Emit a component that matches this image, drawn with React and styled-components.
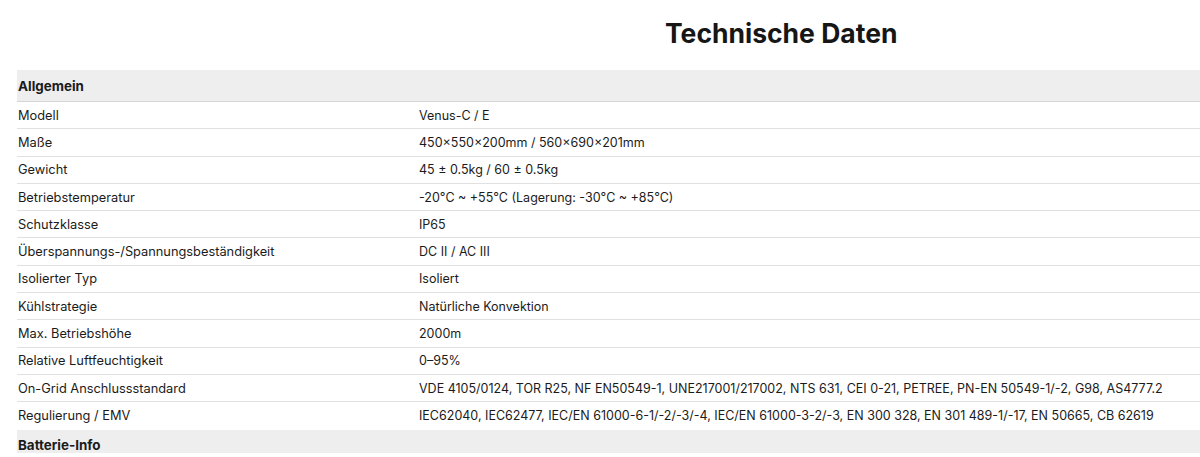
import React from 'react';
import styled, { createGlobalStyle } from 'styled-components';

const bodyFont = "'Inter', 'Lato', sans-serif";

const GlobalStyle = createGlobalStyle`
  html, body {
    margin: 0;
    padding: 0;
    background: #fff;
  }
  body {
    font-family: ${bodyFont};
    color: #1b1b1b;
  }
`;

const Page = styled.div`
  width: 1200px;
  height: 457px;
  overflow: hidden;
  padding-left: 17px;
  box-sizing: border-box;
`;

const Title = styled.h2`
  margin: 0;
  padding: 17px 0 0 648px;
  height: 70px;
  box-sizing: border-box;
  font-weight: 700;
  font-size: 26.5px;
  line-height: 32px;
  color: #161616;
`;

const Table = styled.div`
  display: flex;
  flex-direction: column;
  width: 100%;
`;

const SectionRow = styled.div`
  display: flex;
  align-items: center;
  height: ${(p) => p.$height}px;
  background: #eeeeee;
  border-bottom: ${(p) => (p.$bordered ? '1px solid #d6d6d6' : 'none')};
  box-sizing: border-box;
  font-weight: 700;
  font-size: 13.4px;
  padding-left: 1px;
  padding-top: ${(p) => p.$offset || 0}px;
`;

const Row = styled.div`
  display: grid;
  grid-template-columns: 401px 1fr;
  align-items: center;
  height: 27.3px;
  box-sizing: border-box;
  border-bottom: ${(p) => (p.$last ? 'none' : '1px solid #e0e0e0')};
  white-space: nowrap;
`;

const Label = styled.div`
  padding-left: 1px;
  font-size: 12.8px;
`;

const Value = styled.div`
  padding-left: 1px;
  font-size: 12.5px;
`;

const rows = [
  ['Modell', 'Venus-C / E'],
  ['Maße', '450×550×200mm / 560×690×201mm'],
  ['Gewicht', '45 ± 0.5kg / 60 ± 0.5kg'],
  ['Betriebstemperatur', '-20°C ~ +55°C (Lagerung: -30°C ~ +85°C)'],
  ['Schutzklasse', 'IP65'],
  ['Überspannungs-/Spannungsbeständigkeit', 'DC II / AC III'],
  ['Isolierter Typ', 'Isoliert'],
  ['Kühlstrategie', 'Natürliche Konvektion'],
  ['Max. Betriebshöhe', '2000m'],
  ['Relative Luftfeuchtigkeit', '0–95%'],
  [
    'On-Grid Anschlussstandard',
    'VDE 4105/0124, TOR R25, NF EN50549-1, UNE217001/217002, NTS 631, CEI 0-21, PETREE, PN-EN 50549-1/-2, G98, AS4777.2',
  ],
  [
    'Regulierung / EMV',
    'IEC62040, IEC62477, IEC/EN 61000-6-1/-2/-3/-4, IEC/EN 61000-3-2/-3, EN 300 328, EN 301 489-1/-17, EN 50665, CB 62619',
  ],
];

export default function App() {
  return (
    <>
      <GlobalStyle />
      <Page>
        <Title>Technische Daten</Title>
        <Table>
          <SectionRow $height={32} $bordered>Allgemein</SectionRow>
          {rows.map(([label, value], i) => (
            <Row key={label} $last={i === rows.length - 1}>
              <Label>{label}</Label>
              <Value>{value}</Value>
            </Row>
          ))}
          <SectionRow $height={23} $offset={8}>Batterie-Info</SectionRow>
        </Table>
      </Page>
    </>
  );
}
